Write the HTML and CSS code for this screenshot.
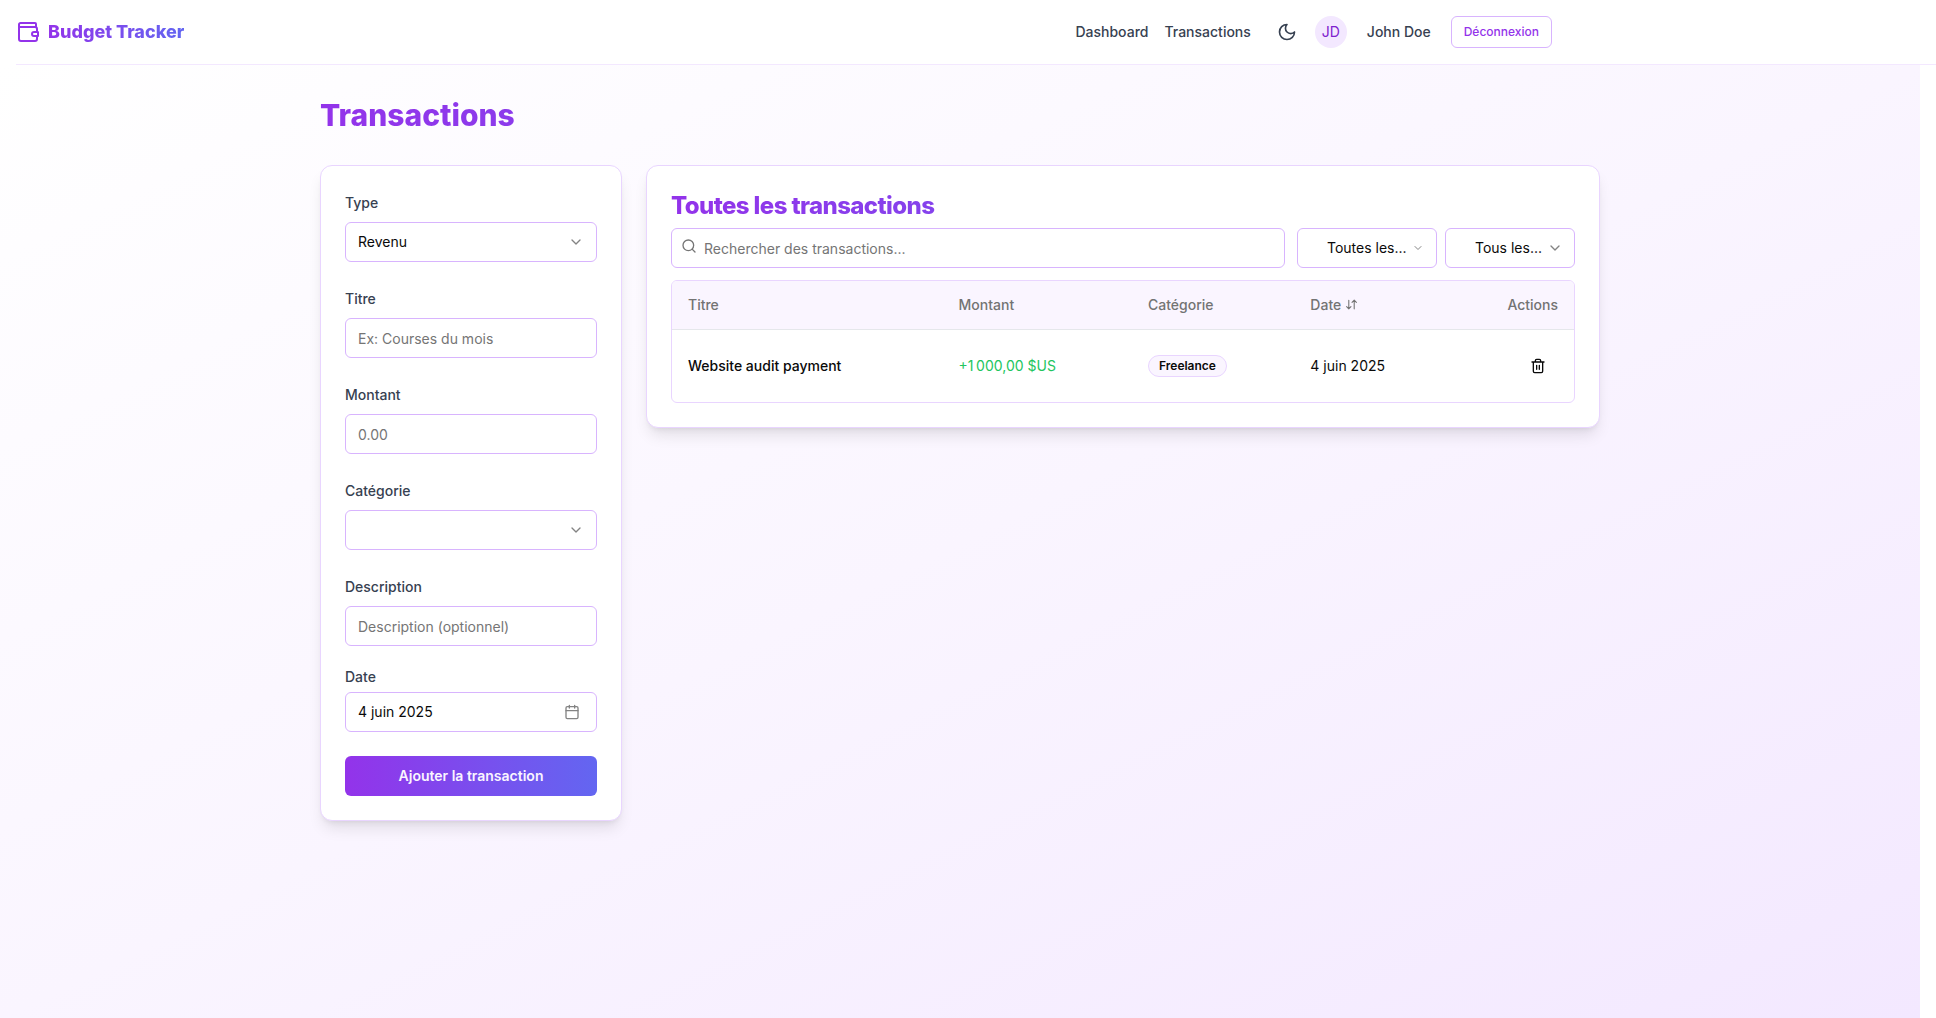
FILE: index.html
```html
<!DOCTYPE html>
<html lang="fr">
<head>
<meta charset="utf-8">
<meta name="viewport" content="width=device-width, initial-scale=1">
<title>Budget Tracker</title>
<link rel="stylesheet" href="styles.css">
</head>
<body>
<div class="page">
  <header class="topbar">
    <div class="topbar-inner">
      <a class="brand" href="#">
        <svg class="brand-icon" viewBox="0 0 24 24" aria-hidden="true"><path d="M20 7V4a1 1 0 0 0-1-1H4.500a1.500 1.500 0 0 0-1.500 1.500V19a2 2 0 0 0 2 2h14a2 2 0 0 0 2-2v-3M3 7h16a2 2 0 0 1 2 2v3M22 12h-4a2 2 0 0 0 0 4h4z"/></svg>
        <span class="brand-name">Budget Tracker</span>
      </a>
      <nav class="nav">
        <div class="nav-links">
          <a href="#">Dashboard</a>
          <a href="#">Transactions</a>
        </div>
        <button class="icon-button" type="button" aria-label="Thème sombre">
          <svg class="moon" viewBox="0 0 24 24" aria-hidden="true"><path d="M12 3a6 6 0 0 0 9 9 9 9 0 1 1-9-9Z"/></svg>
        </button>
        <span class="avatar">JD</span>
        <span class="user-name">John Doe</span>
        <button class="logout" type="button">Déconnexion</button>
      </nav>
    </div>
  </header>

  <main class="main">
    <div class="content">
      <h1 class="page-title">Transactions</h1>
      <div class="columns">
        <form class="card form">
          <div class="field">
            <div class="label-row"><label for="type">Type</label></div>
            <div class="select-box">
              <select id="type"><option>Revenu</option><option>Dépense</option></select>
              <svg class="chevron" viewBox="0 0 24 24" aria-hidden="true"><path d="m6 9 6 6 6-6"/></svg>
            </div>
          </div>
          <div class="field">
            <div class="label-row"><label for="title">Titre</label></div>
            <input class="control" id="title" type="text" placeholder="Ex: Courses du mois">
          </div>
          <div class="field">
            <div class="label-row"><label for="amount">Montant</label></div>
            <input class="control" id="amount" type="text" inputmode="decimal" placeholder="0.00">
          </div>
          <div class="field">
            <div class="label-row"><label for="category">Catégorie</label></div>
            <div class="select-box">
              <select id="category"><option></option><option>Freelance</option></select>
              <svg class="chevron" viewBox="0 0 24 24" aria-hidden="true"><path d="m6 9 6 6 6-6"/></svg>
            </div>
          </div>
          <div class="field">
            <div class="label-row"><label for="description">Description</label></div>
            <input class="control" id="description" type="text" placeholder="Description (optionnel)">
          </div>
          <div class="field">
            <label for="date">Date</label>
            <button class="control date-button" id="date" type="button">4 juin 2025
              <svg class="calendar" viewBox="0 0 24 24" aria-hidden="true"><path d="M8 2v4M16 2v4M3 10h18"/><rect x="3" y="4" width="18" height="18" rx="2"/></svg>
            </button>
          </div>
          <button class="submit" type="submit">Ajouter la transaction</button>
        </form>

        <section class="card list">
          <h2 class="list-title">Toutes les transactions</h2>
          <div class="toolbar">
            <div class="search">
              <svg class="search-icon" viewBox="0 0 24 24" aria-hidden="true"><circle cx="11" cy="11" r="8"/><path d="m21 21-4.300-4.300"/></svg>
              <input class="control" type="search" aria-label="Rechercher" placeholder="Rechercher des transactions...">
            </div>
            <div class="filters">
              <div class="select-box filter-category">
                <select aria-label="Catégories"><option>Toutes les...</option></select>
                <svg class="chevron" viewBox="0 0 24 24" aria-hidden="true"><path d="m6 9 6 6 6-6"/></svg>
              </div>
              <div class="select-box filter-type">
                <select aria-label="Types"><option>Tous les...</option></select>
                <svg class="chevron" viewBox="0 0 24 24" aria-hidden="true"><path d="m6 9 6 6 6-6"/></svg>
              </div>
            </div>
          </div>
          <div class="table-box">
            <table>
              <thead>
                <tr>
                  <th class="col-title">Titre</th>
                  <th class="col-amount">Montant</th>
                  <th class="col-category">Catégorie</th>
                  <th><span class="sortable">Date <svg class="sort" viewBox="0 0 24 24" aria-hidden="true"><path d="m3 16 4 4 4-4M7 20V4M21 8l-4-4-4 4M17 4v16"/></svg></span></th>
                  <th class="col-actions">Actions</th>
                </tr>
              </thead>
              <tbody>
                <tr>
                  <td class="cell-title">Website audit payment</td>
                  <td class="cell-amount">+1&#8239;000,00 $US</td>
                  <td><span class="badge">Freelance</span></td>
                  <td>4 juin 2025</td>
                  <td class="col-actions">
                    <button class="delete" type="button" aria-label="Supprimer">
                      <svg viewBox="0 0 24 24" aria-hidden="true"><path d="M3 6h18M19 6v14a2 2 0 0 1-2 2H7a2 2 0 0 1-2-2V6M8 6V4a2 2 0 0 1 2-2h4a2 2 0 0 1 2 2v2M10 11v6M14 11v6"/></svg>
                    </button>
                  </td>
                </tr>
              </tbody>
            </table>
          </div>
        </section>
      </div>
    </div>
  </main>
</div>
</body>
</html>
```
FILE: styles.css
```css
*,
*::before,
*::after {
  box-sizing: border-box;
}

body {
  margin: 0;
  background: #fff;
  color: #0a0a0a;
  font-family: Inter, "Liberation Sans", sans-serif;
  font-size: 16px;
  line-height: 24px;
}

button,
input,
select {
  font: inherit;
  color: inherit;
  margin: 0;
}

button,
select {
  cursor: pointer;
}

a {
  color: inherit;
  text-decoration: none;
}

h1,
h2 {
  margin: 0;
  font-weight: 800;
}

svg {
  display: block;
  flex: none;
  fill: none;
  stroke: currentColor;
  stroke-width: 2;
  stroke-linecap: round;
  stroke-linejoin: round;
}

.page {
  display: flex;
  flex-direction: column;
  min-height: 100vh;
}

/* Top bar */
.topbar {
  margin-left: 16px;
  background: #fff;
  border-bottom: 1px solid #f3e8ff;
}

.topbar-inner {
  display: flex;
  align-items: center;
  justify-content: space-between;
  max-width: 1536px;
  height: 64px;
}

.brand {
  display: flex;
  align-items: center;
  gap: 8px;
}

.brand-icon {
  width: 24px;
  height: 24px;
  color: #9333ea;
}

.brand-name {
  font-size: 18px;
  line-height: 28px;
  font-weight: 800;
}

.brand-name,
.page-title,
.list-title {
  background: linear-gradient(to right, #9333ea, #6366f1);
  -webkit-background-clip: text;
  background-clip: text;
  color: transparent;
}

.nav {
  display: flex;
  align-items: center;
  color: #374151;
  font-size: 14px;
  line-height: 20px;
  font-weight: 500;
}

.nav-links {
  display: flex;
  gap: 16px;
  margin-right: 16px;
}

.icon-button {
  display: grid;
  place-items: center;
  width: 40px;
  height: 40px;
  padding: 0;
  border: 0;
  background: none;
}

.moon {
  width: 20px;
  height: 20px;
}

.avatar {
  display: grid;
  place-items: center;
  width: 32px;
  height: 32px;
  margin: 0 20px 0 8px;
  border-radius: 50%;
  background: #f3e8ff;
  color: #7e22ce;
  font-weight: 400;
}

.logout {
  height: 32px;
  margin-left: 20px;
  padding: 0 12px;
  border: 1px solid #d8b4fe;
  border-radius: 6px;
  background: #fff;
  color: #9333ea;
  font-size: 12px;
  line-height: 16px;
}

/* Layout */
.main {
  flex: 1;
  margin-right: 16px;
  background: linear-gradient(to bottom right, #fff, #faf5ff, #f3e8ff);
}

.content {
  max-width: 1280px;
  margin: 0 auto;
  padding: 32px 0;
}

.page-title {
  margin-bottom: 32px;
  font-size: 30px;
  line-height: 36px;
}

.columns {
  display: grid;
  grid-template-columns: repeat(4, minmax(0, 1fr));
  align-items: start;
  gap: 24px;
}

.card {
  padding: 24px;
  border: 1px solid #e9d5ff;
  border-radius: 12px;
  background: #fff;
  box-shadow: 0 10px 15px -3px rgba(0, 0, 0, 0.1), 0 4px 6px -4px rgba(0, 0, 0, 0.1);
}

/* Form */
.form {
  display: grid;
  gap: 24px;
}

.field {
  display: grid;
  gap: 8px;
}

.field label {
  color: #374151;
  font-size: 14px;
  line-height: 14px;
  font-weight: 500;
}

.control,
.select-box select {
  width: 100%;
  height: 40px;
  padding: 0 12px;
  border: 1px solid #d8b4fe;
  border-radius: 6px;
  background: #fff;
  font-size: 14px;
  line-height: 20px;
  appearance: none;
}

.control::placeholder {
  color: #757575;
  opacity: 1;
}

.select-box {
  position: relative;
}

.chevron {
  position: absolute;
  top: 12px;
  right: 13px;
  width: 16px;
  height: 16px;
  opacity: 0.5;
  pointer-events: none;
}

.date-button {
  display: flex;
  align-items: center;
  justify-content: space-between;
  padding-right: 16px;
}

.calendar {
  width: 16px;
  height: 16px;
  opacity: 0.5;
}

.submit {
  height: 40px;
  border: 0;
  border-radius: 6px;
  background: linear-gradient(to right, #9333ea, #6366f1);
  color: #faf5ff;
  font-size: 14px;
  line-height: 20px;
  font-weight: 600;
}

/* Transaction list */
.list {
  grid-column: span 3;
}

.list-title {
  margin-bottom: 6px;
  font-size: 24px;
  line-height: 32px;
  letter-spacing: -0.025em;
}

.toolbar {
  display: flex;
  gap: 12px;
  margin-bottom: 12px;
}

.search {
  position: relative;
  flex: 1;
}

.search .control {
  padding-left: 32px;
}

.search-icon {
  position: absolute;
  top: 10px;
  left: 10px;
  width: 16px;
  height: 16px;
  color: #757575;
}

.filters {
  display: flex;
  gap: 8px;
}

.filters select {
  padding: 0 0 0 29px;
}

.filter-category {
  width: 140px;
}

.filter-category .chevron {
  top: 14px;
  width: 12px;
  height: 12px;
}

.filter-type {
  width: 130px;
}

.filter-type .chevron {
  right: 12px;
}

.table-box {
  overflow: hidden;
  border: 1px solid #e9d5ff;
  border-radius: 6px;
}

table {
  width: 100%;
  border-collapse: collapse;
  table-layout: fixed;
  font-size: 14px;
  line-height: 20px;
}

th,
td {
  padding: 0 16px;
  text-align: left;
}

th {
  height: 48px;
  border-bottom: 1px solid #e5e7eb;
  background: #faf5ff;
  color: #737373;
  font-weight: 500;
}

td {
  height: 73px;
}

.col-title {
  width: 30%;
}

.col-amount {
  width: 21%;
}

.col-category {
  width: 18%;
}

.col-actions {
  text-align: right;
}

.sortable {
  display: flex;
  align-items: center;
  gap: 4px;
}

.sort {
  width: 13px;
  height: 13px;
}

.cell-title {
  font-weight: 500;
}

.cell-amount {
  color: #22c55e;
}

.badge {
  display: inline-block;
  padding: 2px 10px;
  border: 1px solid #e9d5ff;
  border-radius: 999px;
  background: #faf5ff;
  font-size: 12px;
  line-height: 16px;
  font-weight: 600;
}

.delete {
  display: inline-grid;
  place-items: center;
  width: 40px;
  height: 40px;
  padding: 0;
  border: 0;
  background: none;
  vertical-align: middle;
}

.delete svg {
  width: 16px;
  height: 16px;
}
```
